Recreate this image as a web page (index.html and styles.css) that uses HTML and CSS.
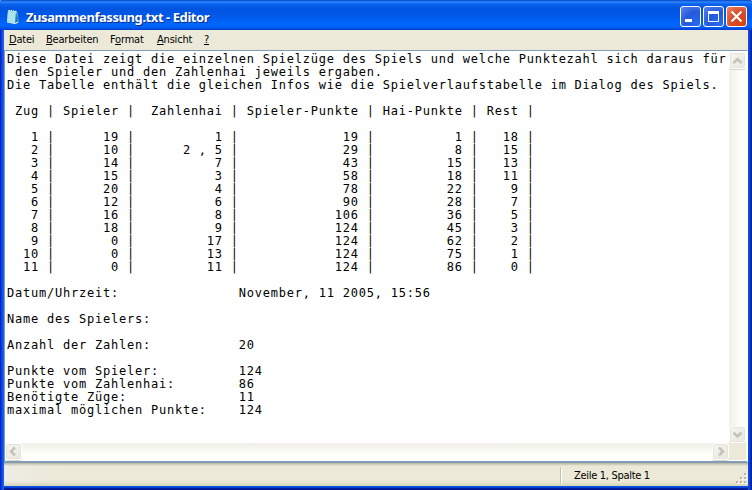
FILE: index.html
```html
<!DOCTYPE html>
<html lang="de">
<head>
<meta charset="utf-8">
<title>Zusammenfassung.txt - Editor</title>
<link rel="stylesheet" href="styles.css">
</head>
<body>
<div class="window">
  <header class="titlebar">
    <svg class="app-icon" width="16" height="16" viewBox="0 0 16 16">
      <path d="M2 1L11 2L13 13L10 15L1 13Z" fill="#75c5df"/>
      <path d="M2 2L10 3L9 14L1 12Z" fill="#a7e4ee"/>
      <path d="M10 3L13 12L10 14L9 14Z" fill="#277fb5"/>
      <path d="M3 1.500h1M5 1.500h1M7 2h1M9 2.500h1" stroke="#fff"/>
      <path d="M1 13L9 14.500L12 13" stroke="#d8f3f6" fill="none"/>
    </svg>
    <h1 class="title">Zusammenfassung.txt - Editor</h1>
    <div class="controls">
      <span class="control"><svg width="21" height="21"><path d="M5 14.500h7" stroke="#fff" stroke-width="3"/></svg></span>
      <span class="control"><svg width="21" height="21"><path d="M5.500 6v9.500h10V6" stroke="#fff" fill="none"/><path d="M5 6.500h11" stroke="#fff" stroke-width="3"/></svg></span>
      <span class="control close"><svg width="21" height="21"><path d="M5.500 5.500l10 10M15.500 5.500l-10 10" stroke="#fff" stroke-width="2.200"/></svg></span>
    </div>
  </header>
  <nav class="menu">
    <span class="item datei"><u>D</u>atei</span>
    <span class="item bearbeiten"><u>B</u>earbeiten</span>
    <span class="item format">F<u>o</u>rmat</span>
    <span class="item ansicht"><u>A</u>nsicht</span>
    <span class="item"><u>?</u></span>
  </nav>
  <main class="editor">
    <pre class="text">Diese Datei zeigt die einzelnen Spielzüge des Spiels und welche Punktezahl sich daraus für
 den Spieler und den Zahlenhai jeweils ergaben.
Die Tabelle enthält die gleichen Infos wie die Spielverlaufstabelle im Dialog des Spiels.

 Zug | Spieler |  Zahlenhai | Spieler-Punkte | Hai-Punkte | Rest |

   1 |      19 |          1 |             19 |          1 |   18 |
   2 |      10 |      2 , 5 |             29 |          8 |   15 |
   3 |      14 |          7 |             43 |         15 |   13 |
   4 |      15 |          3 |             58 |         18 |   11 |
   5 |      20 |          4 |             78 |         22 |    9 |
   6 |      12 |          6 |             90 |         28 |    7 |
   7 |      16 |          8 |            106 |         36 |    5 |
   8 |      18 |          9 |            124 |         45 |    3 |
   9 |       0 |         17 |            124 |         62 |    2 |
  10 |       0 |         13 |            124 |         75 |    1 |
  11 |       0 |         11 |            124 |         86 |    0 |

Datum/Uhrzeit:               November, 11 2005, 15:56

Name des Spielers:

Anzahl der Zahlen:           20

Punkte vom Spieler:          124
Punkte vom Zahlenhai:        86
Benötigte Züge:              11
maximal möglichen Punkte:    124</pre>
    <div class="scroll vertical">
      <span class="arrow"><svg width="15" height="15"><path d="M3.500 10l4-4 4 4" fill="none" stroke="#c4c3ba" stroke-width="2.500"/></svg></span>
      <span class="arrow"><svg width="15" height="15"><path d="M3.500 5.500l4 4 4-4" fill="none" stroke="#c4c3ba" stroke-width="2.500"/></svg></span>
    </div>
    <div class="scroll horizontal">
      <span class="arrow"><svg width="15" height="15"><path d="M9 3.500l-4 4 4 4" fill="none" stroke="#c4c3ba" stroke-width="2.500"/></svg></span>
      <span class="arrow"><svg width="15" height="15"><path d="M6 3.500l4 4-4 4" fill="none" stroke="#c4c3ba" stroke-width="2.500"/></svg></span>
    </div>
    <div class="corner"></div>
  </main>
  <footer class="status">
    <span class="position">Zeile 1, Spalte 1</span>
    <svg class="grip" width="12" height="12"><path d="M9 1h2v2h-2zM5 5h2v2h-2zM9 5h2v2h-2zM1 9h2v2h-2zM5 9h2v2h-2zM9 9h2v2h-2z" fill="#fff"/><path d="M8 0h2v2h-2zM4 4h2v2h-2zM8 4h2v2h-2zM0 8h2v2h-2zM4 8h2v2h-2zM8 8h2v2h-2z" fill="#b8b4a3"/></svg>
  </footer>
</div>
</body>
</html>
```
FILE: styles.css
```css
* { box-sizing: border-box; }
body { margin: 0; background: #fff; overflow: hidden; }
svg { display: block; }
.window {
  width: 752px;
  height: 490px;
  display: grid;
  grid-template-rows: 30px 20px 413px 23px;
  padding: 0 4px 4px;
  border-radius: 2px 2px 0 0;
  overflow: hidden;
  background: linear-gradient(90deg, #0014a8 0, #0831d9 1px, #0a4be8 2px, #166aee 4px, #0855dd 748px, #0441d8 750px, #001da0 751px);
}
.titlebar {
  display: flex;
  align-items: center;
  margin: 0 -4px;
  padding: 3px 5px 0 6px;
  background: linear-gradient(#0046c8 0, #2f86fb 2px, #0a63ee 4px, #0055e0 8px, #0058e8 16px, #0066ff 24px, #0061f6 27px, #003dd0 30px);
}
.title {
  margin: 0 auto 0 4px;
  color: #fff;
  font: bold 13px/20px "Noto Sans", sans-serif;
  letter-spacing: -0.43px;
  text-shadow: 1px 1px #0a2e8c;
  white-space: pre;
}
.controls { display: flex; gap: 2px; }
.control {
  width: 21px;
  height: 21px;
  border: 1px solid #fff;
  border-radius: 3px;
  background: radial-gradient(circle at 80% 85%, #2869ee, #2558dc 50%, #5b86ee);
}
.control svg { margin: -1px; }
.close { background: radial-gradient(circle at 80% 85%, #d84314, #da4a27 50%, #e9866c); }
.menu {
  display: flex;
  padding: 1px 5px 0;
  background: #ece9d8;
  color: #000;
  font: 11px/18px "DejaVu Sans Condensed", "DejaVu Sans", sans-serif;
  font-stretch: condensed;
  letter-spacing: -0.2px;
}
.menu u { text-underline-offset: 1px; }
.datei { width: 37px; }
.bearbeiten { width: 64px; }
.format { width: 47px; }
.ansicht { width: 47px; }
.editor {
  display: grid;
  grid-template: 1fr 17px / 1fr 17px;
  border: 1px solid #7f9db9;
  border-bottom-width: 2px;
  border-right-color: #fff;
  padding: 1px 1px 1px 0;
  background: #fff;
}
.text {
  margin: 0;
  padding: 1px 0 0 2px;
  overflow: hidden;
  color: #000;
  font: 12px/13px "DejaVu Sans Mono", monospace;
  letter-spacing: 0.770px;
}
.scroll { display: flex; justify-content: space-between; }
.vertical { flex-direction: column; background: linear-gradient(90deg, #f0efe8, #fefefb 70%); }
.horizontal { background: linear-gradient(#f0efe8, #fefefb 70%); }
.arrow {
  width: 17px;
  height: 17px;
  border: 1px solid #fff;
  border-radius: 3px;
  background: linear-gradient(135deg, #f6f5ef, #e8e7df);
  box-shadow: inset 0 0 0 1px #e5e3d7, 0 1px #d8d5c5;
}
.corner { background: #ece9d8; }
.status {
  display: flex;
  justify-content: flex-end;
  background:
    linear-gradient(#b7b39d 0, #dedac800 3px, #d8d2b800 18px, #d8d2b8 23px),
    linear-gradient(90deg, #edece6, #ece9d8 60px);
  font: 11px/20px "DejaVu Sans Condensed", "DejaVu Sans", sans-serif;
  font-stretch: condensed;
  letter-spacing: -0.3px;
  box-shadow: 0 1px #0855dd, 0 2px #0441d8, 0 3px #001ea0, 0 4px #00138c;
}
.position {
  width: 176px;
  margin: 4px 0 2px;
  padding-left: 13px;
  line-height: 18px;
  border-left: 1px solid #c5c2b2;
  box-shadow: inset 1px 0 #fff;
}
.grip { align-self: flex-end; margin: 0 0 1px; }
```
